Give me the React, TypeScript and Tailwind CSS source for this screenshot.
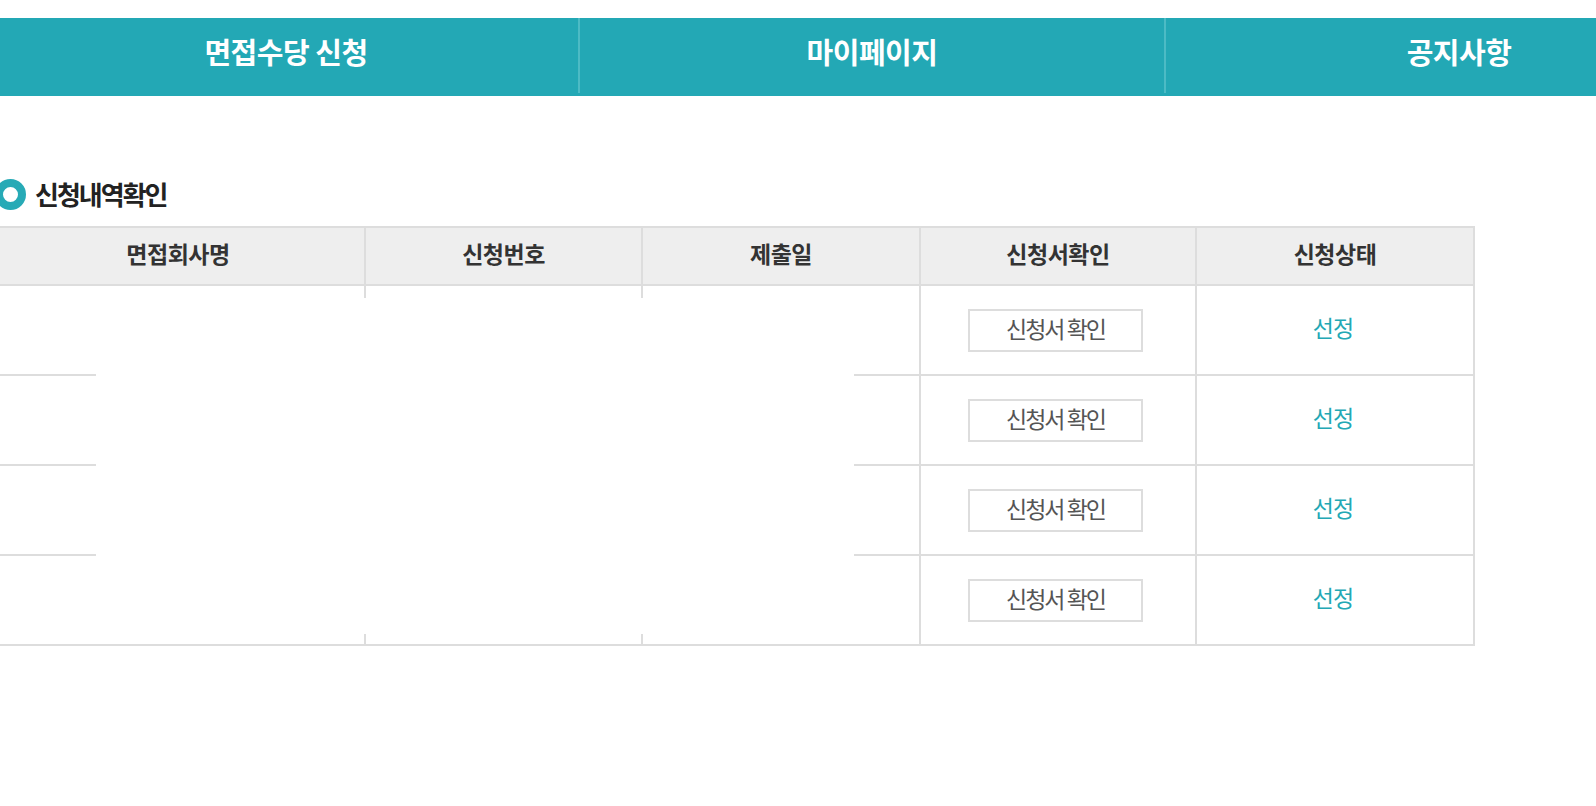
import React from "react";

const rows = [0, 1, 2, 3];

export default function App() {
  return (
    <div className="w-[1596px] h-[806px] overflow-hidden bg-white font-['Noto_Sans_CJK_KR','Noto_Sans',sans-serif]">
      {/* Top navigation */}
      <div className="mt-[18px] h-[78px] bg-[#23a8b5]">
        <div className="flex ml-[-6px] h-full">
          <div className="w-[586px] h-[75px] shrink-0 flex justify-center items-start pt-[14px] border-r-2 border-[#4cbbc5]">
            <span className="text-[29px] leading-[38px] font-bold text-white tracking-[-0.5px]">면접수당 신청</span>
          </div>
          <div className="w-[586px] h-[75px] shrink-0 flex justify-center items-start pt-[14px] border-r-2 border-[#4cbbc5]">
            <span className="text-[29px] leading-[38px] font-bold text-white tracking-[-0.5px]">마이페이지</span>
          </div>
          <div className="w-[586px] h-[75px] shrink-0 flex justify-center items-start pt-[14px]">
            <span className="text-[29px] leading-[38px] font-bold text-white tracking-[-0.5px]">공지사항</span>
          </div>
        </div>
      </div>

      {/* Section title */}
      <div className="mt-[83px] h-[31px] flex items-center gap-[9px] ml-[-5px]">
        <div className="w-[31px] h-[31px] rounded-full border-[8px] border-[#27aab6] shrink-0" />
        <span className="text-[26px] leading-[31px] font-bold text-[#222] tracking-[-2px] pb-[2px]">신청내역확인</span>
      </div>

      {/* Table */}
      <div className="relative mt-[16px] ml-[-10px] w-[1485px] border-2 border-[#dddddd]">
        <div className="flex h-[56px] bg-[#eeeeee] text-[23px] font-bold text-[#333] tracking-[-0.5px]">
          <div className="w-[374px] shrink-0 border-r-2 border-[#dddddd] flex items-center justify-center pb-[6px]">면접회사명</div>
          <div className="w-[277px] shrink-0 border-r-2 border-[#dddddd] flex items-center justify-center pb-[6px]">신청번호</div>
          <div className="w-[278px] shrink-0 border-r-2 border-[#dddddd] flex items-center justify-center pb-[6px]">제출일</div>
          <div className="w-[276px] shrink-0 border-r-2 border-[#dddddd] flex items-center justify-center pb-[6px]">신청서확인</div>
          <div className="flex-1 flex items-center justify-center pb-[6px]">신청상태</div>
        </div>
        {rows.map((r) => (
          <div key={r} className="flex h-[90px] border-t-2 border-[#dddddd]">
            <div className="w-[374px] shrink-0 border-r-2 border-[#dddddd]" />
            <div className="w-[277px] shrink-0 border-r-2 border-[#dddddd]" />
            <div className="w-[278px] shrink-0 border-r-2 border-[#dddddd]" />
            <div className="w-[276px] shrink-0 border-r-2 border-[#dddddd] flex items-center justify-center pr-[5px]">
              <button className="w-[175px] h-[43px] border-2 border-[#dddddd] bg-white text-[23px] leading-none text-[#555] tracking-[-2px] flex items-center justify-center pb-[4px]">
                신청서 확인
              </button>
            </div>
            <div className="flex-1 flex items-center justify-center text-[23px] text-[#23a8b5] tracking-[-1px] pb-[6px] pr-[4px]">선정</div>
          </div>
        ))}
        {/* masked region */}
        <div className="absolute left-[104px] top-[70px] w-[758px] h-[336px] bg-white" />
      </div>
    </div>
  );
}
